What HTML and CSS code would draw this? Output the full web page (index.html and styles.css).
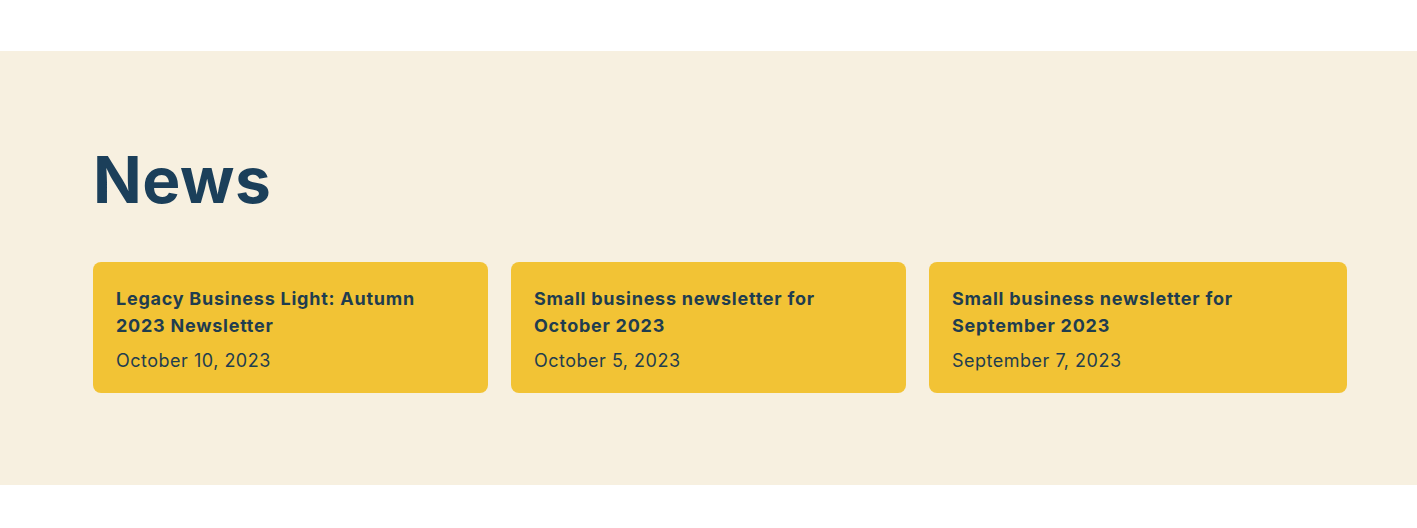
FILE: index.html
```html
<!DOCTYPE html>
<html lang="en">
  <head>
    <meta charset="UTF-8" />
    <meta name="viewport" content="width=device-width, initial-scale=1.0" />
    <title>News</title>
    <link rel="stylesheet" href="styles.css">
  </head>
  <body>
    <section class="news">
      <div class="news-inner">
        <h2 class="news-title">News</h2>

        <div class="news-list">
          <a class="news-card" href="#">
            <h3>Legacy Business Light: Autumn 2023 Newsletter</h3>
            <p>October 10, 2023</p>
          </a>
          <a class="news-card" href="#">
            <h3>Small business newsletter for October 2023</h3>
            <p>October 5, 2023</p>
          </a>
          <a class="news-card" href="#">
            <h3>Small business newsletter for September 2023</h3>
            <p>September 7, 2023</p>
          </a>
        </div>
      </div>
    </section>
  </body>
</html>
```

FILE: styles.css
```css
body {
  margin: 0;
  background: #fff;
  font-family: Inter, "Noto Sans", arial, sans-serif;
}
.news {
  margin-top: 51px;
  background: #f7f0e0;
  padding: 90px 70px 92px 93px;
}
.news-title {
  margin: 0 0 44px;
  font-size: 64px;
  line-height: 77px;
  font-weight: 700;
  color: #1b3f5a;
  letter-spacing: 0.5px;
}
.news-list {
  display: grid;
  grid-template-columns: 395px 395px 1fr;
  gap: 23px;
}
.news-card {
  display: block;
  background: #f2c335;
  border-radius: 8px;
  padding: 23px 23px 19px;
  color: #1f3d4f;
  text-decoration: none;
}
.news-card h3 {
  margin: 0 0 8px;
  font-size: 18px;
  line-height: 27px;
  font-weight: 700;
  letter-spacing: 0.75px;
  max-width: 320px;
}
.news-card p {
  margin: 0;
  font-size: 18px;
  line-height: 27px;
  font-weight: 400;
  letter-spacing: 0.5px;
}
```
